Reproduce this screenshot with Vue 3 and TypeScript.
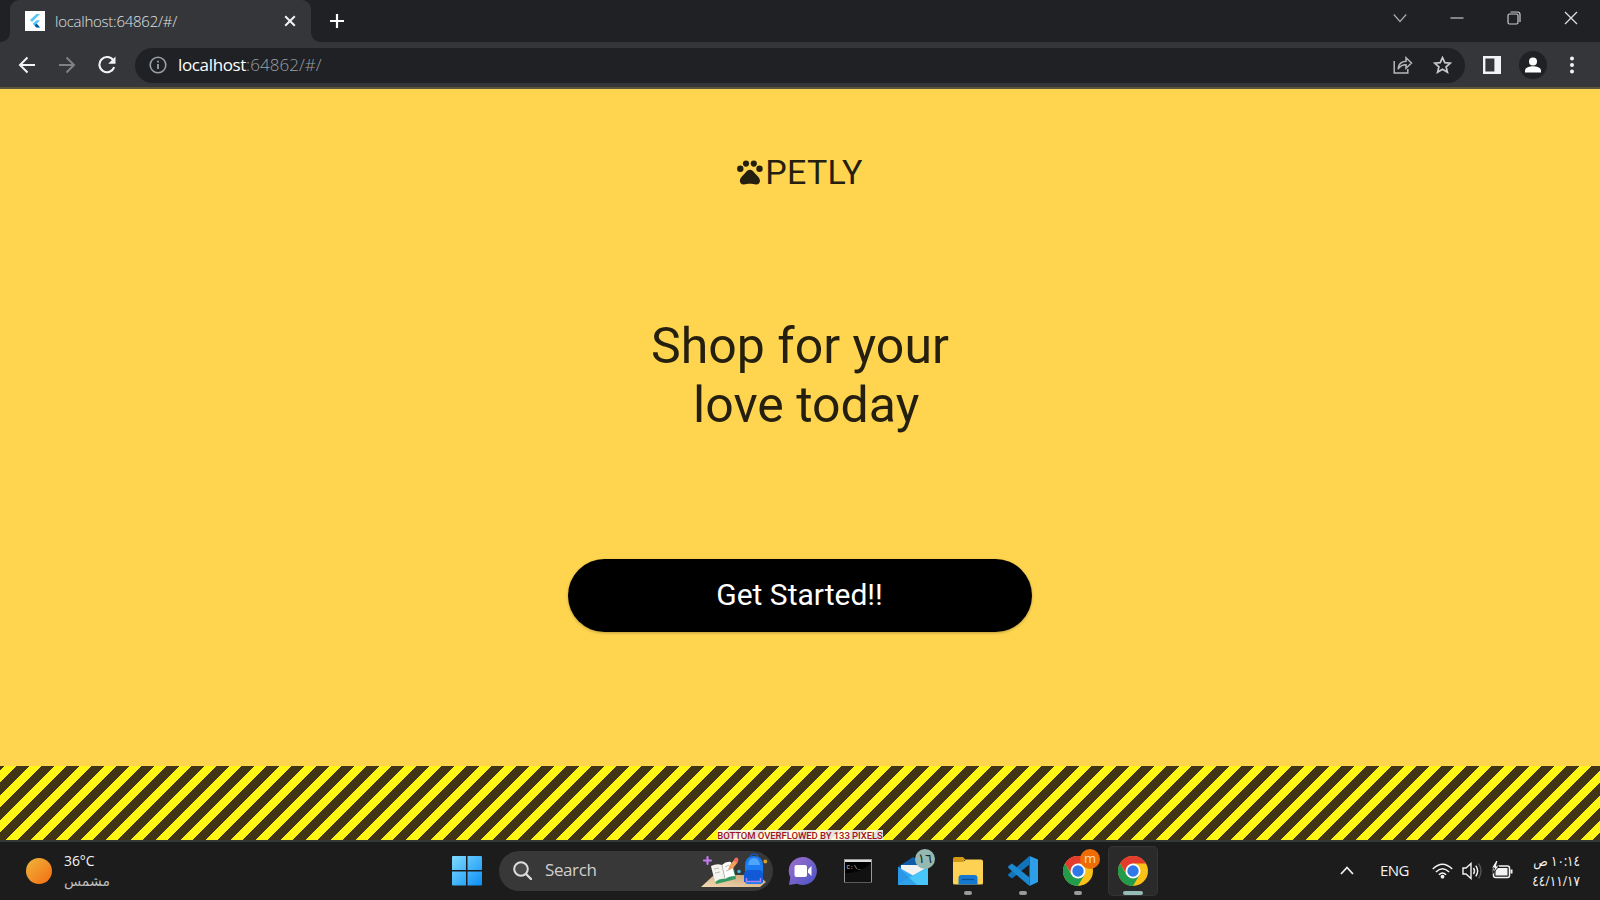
<script setup lang="ts">
const overflowLabel = 'BOTTOM OVERFLOWED BY 133 PIXELS'
</script>

<template>
  <div class="screen">
    <header class="tabs">
      <div class="tab">
        <svg class="favicon" width="20" height="20" viewBox="0 0 20 20">
          <rect width="20" height="20" fill="#fff" />
          <path d="M11.5 3H15L7 11 5 9z" fill="#54c5f8" />
          <path d="M11.5 9.3H15L11.7 12.7 15 16.500H11.500L7.700 12.700z" fill="#54c5f8" />
          <path d="M9.600 14.500l2-1.900L15 16.500H11.500z" fill="#01579b" />
        </svg>
        <span class="tab-title">localhost:64862/#/</span>
        <svg width="12" height="12" viewBox="0 0 12 12"><path d="M1.200 1.200l9.600 9.600M10.800 1.200L1.200 10.800" stroke="#f1f3f4" stroke-width="2" /></svg>
      </div>
      <svg class="plus" width="16" height="16" viewBox="0 0 16 16"><path d="M8 1v14M1 8h14" stroke="#fff" stroke-width="2.200" /></svg>
      <div class="win-controls">
        <svg width="14" height="14" viewBox="0 0 14 14"><path d="M.8 3.500L7 10.500l6.200-7" fill="none" stroke="#aaabad" stroke-width="1.200" /></svg>
        <svg width="14" height="14" viewBox="0 0 14 14"><path d="M.5 7h13" stroke="#bbb" stroke-width="1.300" /></svg>
        <svg width="14" height="14" viewBox="0 0 14 14"><g fill="none" stroke="#ccc" stroke-width="1.200"><rect x="1" y="3" width="10" height="10" rx="1.500" /><path d="M3.500 1H10.500Q13 1 13 3.500V11" /></g></svg>
        <svg width="14" height="14" viewBox="0 0 14 14"><path d="M1 1l12 12M13 1L1 13" stroke="#ddd" stroke-width="1.300" /></svg>
      </div>
    </header>

    <nav class="toolbar">
      <svg width="18" height="18" viewBox="0 0 18 18"><path d="M17 9H2.500M9.500 1.500L2 9l7.500 7.500" fill="none" stroke="#f1f3f4" stroke-width="2" /></svg>
      <svg width="18" height="18" viewBox="0 0 18 18"><path d="M1 9h14.500M8.500 1.500L16 9l-7.500 7.500" fill="none" stroke="#808184" stroke-width="2" /></svg>
      <svg width="18" height="18" viewBox="0 0 18 18"><path d="M15.200 4.200A7.600 7.600 0 1 0 16.200 11.200" fill="none" stroke="#f1f3f4" stroke-width="2.100" /><path d="M17.500.5V7.800H10.200z" fill="#f1f3f4" /></svg>
      <div class="address">
        <svg width="18" height="18" viewBox="0 0 18 18"><circle cx="9" cy="9" r="7.800" fill="none" stroke="#9aa0a6" stroke-width="1.600" /><path d="M9 8v5M9 4.800v1.800" stroke="#9aa0a6" stroke-width="1.800" /></svg>
        <span class="url"><b>localhost</b>:64862/#/</span>
        <svg class="share" width="20" height="18" viewBox="0 0 20 18"><g fill="none" stroke="#b4b6b9" stroke-width="1.500"><path d="M1.200 5v12h13.600v-4" /><path d="M5 13C5.500 8 8.500 5.500 13 5.300V1.800L18.500 7 13 12.200V8.800C9.500 8.800 7 10 5 13z" /></g></svg>
        <svg width="19" height="18" viewBox="0 0 19 18"><path d="M9.500 1.600l2.300 5 5.500.5-4.200 3.700 1.300 5.400-4.900-2.900-4.900 2.900 1.300-5.400L1.700 7.100l5.500-.5z" fill="none" stroke="#c7c9cc" stroke-width="1.700" /></svg>
      </div>
      <svg class="panel" width="18" height="18" viewBox="0 0 18 18"><path fill-rule="evenodd" d="M0 0h18v18H0zM2.400 2.600v12.800h9V2.600z" fill="#f1f3f4" /></svg>
      <svg class="avatar" width="28" height="28" viewBox="0 0 28 28"><circle cx="14" cy="14" r="14" fill="#202124" /><circle cx="14" cy="10.500" r="4" fill="#fff" /><path d="M6 21.500v-2c0-3 5-4.300 8-4.300s8 1.300 8 4.300v2z" fill="#fff" /></svg>
      <svg class="dots" width="6" height="18" viewBox="0 0 6 18"><g fill="#f1f3f4"><circle cx="3" cy="2.500" r="2" /><circle cx="3" cy="9" r="2" /><circle cx="3" cy="15.500" r="2" /></g></svg>
    </nav>

    <main class="page">
      <div class="brand">
        <svg width="26" height="25" viewBox="0 0 26 25"><g fill="#251f10"><circle cx="3.300" cy="8.800" r="3.200" /><circle cx="9" cy="3.600" r="3.100" /><circle cx="16.800" cy="3.600" r="3.100" /><circle cx="22.500" cy="8.800" r="3.200" /><path d="M12.900 9.800c2.200 0 3.400 1.500 4.700 3.100 1.600 2 4.900 4.200 5.300 7.100.4 2.600-1.200 4.500-3.800 4.500-2.200 0-3.800-.7-6.200-.7s-4 .7-6.200.7c-2.600 0-4.200-1.900-3.800-4.500.4-2.900 3.700-5.100 5.300-7.100 1.300-1.600 2.500-3.100 4.700-3.100z" /></g></svg>
        <span>PETLY</span>
      </div>
      <h1>Shop for your<br>&nbsp;love today</h1>
      <button>Get Started!!</button>
      <div class="hazard"><span>{{ overflowLabel }}</span></div>
    </main>

    <footer class="taskbar">
      <div class="weather">
        <i class="sun"></i>
        <div><p>36°C</p><p class="cond" dir="rtl">مشمس</p></div>
      </div>
      <svg class="start" width="30" height="30" viewBox="0 0 30 30">
        <defs><linearGradient id="win" x1="0" y1="0" x2="30" y2="30" gradientUnits="userSpaceOnUse"><stop offset="0" stop-color="#7fdcff" /><stop offset="1" stop-color="#0a8df5" /></linearGradient></defs>
        <path d="M1 0h13v14H0V1q0-1 1-1zM15.500 0H29q1 0 1 1v13H15.500zM0 15.500h14v14H1q-1 0-1-1zM15.500 15.500H30v13q0 1-1 1H15.500z" fill="url(#win)" />
      </svg>
      <div class="search">
        <svg width="19" height="19" viewBox="0 0 19 19"><circle cx="8" cy="8" r="6.800" fill="#4a4a4a" stroke="#ddd" stroke-width="2" /><path d="M13 13l5 5" stroke="#ddd" stroke-width="2.400" stroke-linecap="round" /></svg>
        <span>Search</span>
        <svg class="art" width="68" height="36" viewBox="0 0 68 36">
          <defs><linearGradient id="desk" x1="0" y1="1" x2="1" y2="0"><stop offset="0" stop-color="#f3d9b4" /><stop offset="1" stop-color="#c9a172" /></linearGradient></defs>
          <path d="M1 34L14 22H58l8 7-6 5z" fill="url(#desk)" />
          <path d="M7.500 4v7M4 7.500h7" stroke="#c47af0" stroke-width="2.200" stroke-linecap="round" />
          <path d="M11 14l22-4 3 16-20 5z" fill="#349a61" />
          <path d="M11 13q6-3 11-1l3 14q-5-1-10 3z" fill="#f5f4ef" /><path d="M22 12q4-4 9-3l4 14q-6 0-10 3z" fill="#fff" />
          <path d="M22 12l3 14" stroke="#b9b9b4" />
          <path d="M14 16l5-1M15 20l5-1M25 14l4-2M26 18l5-2" stroke="#bbb" />
          <path d="M28 17l1.500-4.500 5-6 3.500 2.500-5 6.300z" fill="#f2a05a" /><path d="M33.500 7.500l1.500-2.500q3-1.500 3.500 2l-1.500 3z" fill="#ee6b5b" />
          <circle cx="39" cy="18.500" r="1.800" fill="#48b9dd" /><circle cx="65.300" cy="8.500" r="1.900" fill="#d8a020" />
          <path d="M50 5q0-4 4-4t4 4" fill="none" stroke="#1455b8" stroke-width="1.500" />
          <path d="M45 28V13q0-10 9-10t9 10v15q0 3-3 3H48q-3 0-3-3z" fill="#1c7af2" />
          <path d="M48 12q1-7 6-7t6 7z" fill="#4ea6ff" /><path d="M44 29V22q0-5 5-5h9q5 0 5 5v7z" fill="#1259d6" /><path d="M46.500 25v3.500h14V25" fill="none" stroke="#a882ef" stroke-width="1.500" />
        </svg>
      </div>
      <div class="apps">
        <div class="app">
          <svg width="30" height="30" viewBox="0 0 30 30"><defs><linearGradient id="chat" x1="0" y1="0" x2="1" y2="1"><stop offset="0" stop-color="#a06fcf" /><stop offset="1" stop-color="#4854c4" /></linearGradient></defs><path d="M15 1a14 14 0 1 1-6 26.700L1 29l1.300-7.500A14 14 0 0 1 15 1z" fill="url(#chat)" /><rect x="6.500" y="9" width="12.500" height="12" rx="2" fill="#fff" /><path d="M20 13.500l3.500-3.500v10L20 16.500z" fill="#fff" /></svg>
        </div>
        <div class="app">
          <svg width="28" height="24" viewBox="0 0 28 24"><rect x=".5" y=".5" width="27" height="22.500" fill="#000" stroke="#999" /><path d="M1 1h26v2H1z" fill="#ddd" /><path d="M1 23V14Q17 14 27 4V23z" fill="#111" /><text x="2.500" y="9.500" font-size="6" font-family="Liberation Mono" fill="#ddd">C:\_</text></svg>
        </div>
        <div class="app">
          <svg width="30" height="30" viewBox="0 0 30 30"><path d="M0 11L15 1l15 10v18H0z" fill="#0f5ca8" /><path d="M3 9h24v12H3z" fill="#f2f2f2" /><path d="M0 11l15 8.500L30 11v17q0 1-1 1H1q-1 0-1-1z" fill="#35aaf0" /><path d="M0 28L30 11v17q0 1-1 1H1z" fill="#47c6f7" /><path d="M0 11l19 18H1q-1 0-1-1z" fill="#1f8be0" opacity=".6" /></svg>
          <span class="badge mail">١٦</span>
        </div>
        <div class="app">
          <svg width="30" height="30" viewBox="0 0 30 30"><path d="M0 3q0-2 2-2h8l3 3h-2v5H0z" fill="#d49a15" /><path d="M0 6h10l3-2.500h15q2 0 2 2V27q0 1.500-1.500 1.500h-27Q0 28.500 0 27z" fill="#fdd153" /><path d="M5.500 28.500V22q0-3 3-3h13q3 0 3 3v6.500z" fill="#1679cf" /><path d="M9 23.500h12" stroke="#0b4f94" stroke-width="1.300" /></svg>
          <i class="pill"></i>
        </div>
        <div class="app">
          <svg width="30" height="30" viewBox="0 0 30 30"><path d="M21.500 0L30 3.500V26l-8.500 4z" fill="#2d9fe8" /><path d="M21.500 0v8.500L4 22.500.5 20q-.8-1 0-2z" fill="#1273b8" /><path d="M21.500 30v-8.500L4 7.500.5 10q-.8 1 0 2z" fill="#1b88d2" /></svg>
          <i class="pill"></i>
        </div>
        <div v-for="active in [false, true]" :key="String(active)" class="app" :class="{ active }">
          <svg width="30" height="30" viewBox="0 0 30 30"><circle cx="15" cy="15" r="15" fill="#fbc116" /><path d="M15 15L9 18.500 2 7.500A15 15 0 0 1 28 7.500H15z" fill="#e33b2e" /><path d="M2 7.500A15 15 0 0 0 15 30L21.500 18.700H8.500z" fill="#229c4c" /><circle cx="15" cy="15" r="7.500" fill="#fff" /><circle cx="15" cy="15" r="5.700" fill="#2f78e8" /></svg>
          <span v-if="!active" class="badge profile">m</span>
          <i class="pill"></i>
        </div>
      </div>
      <div class="tray">
        <svg width="14" height="9" viewBox="0 0 14 9"><path d="M1 8l6-6.500L13 8" fill="none" stroke="#eee" stroke-width="1.800" /></svg>
        <span class="lang">ENG</span>
        <svg class="wifi" width="21" height="16" viewBox="0 0 21 16"><g fill="none" stroke="#f2f2f2" stroke-width="1.500"><path d="M.8 6Q10.500-3.600 20.200 6M3.900 9Q10.500 2.400 17.100 9M6.900 11.800Q10.500 8.200 14.100 11.800" /></g><circle cx="10.500" cy="13.700" r="1.900" fill="#f2f2f2" /></svg>
        <svg class="vol" width="21" height="18" viewBox="0 0 21 18"><g fill="none" stroke="#f2f2f2" stroke-width="1.400"><path d="M1 6h3l5-4.500v15L4 12H1z" /><path d="M11.500 6q2 3 0 6M13.800 3.700q3.700 5.300 0 10.600" /><path d="M16.500 1.500q5 7.500 0 15" stroke="#555" /></g></svg>
        <svg class="bat" width="21" height="18" viewBox="0 0 21 18"><rect x="1.500" y="4" width="16" height="11.500" rx="2" fill="none" stroke="#f2f2f2" stroke-width="1.500" /><path d="M3.500 6h12v7.500h-12z" fill="#f2f2f2" /><path d="M18.500 7.500h2v4h-2z" fill="#f2f2f2" /><path d="M4-1.500L-.5 6H2.500L1 11.500 7 4H4.500L6-1.500z" fill="#f2f2f2" stroke="#1c1c1c" /></svg>
        <div class="clock"><p dir="rtl">١٠:١٤ ص</p><p class="date" dir="ltr">٤٤/١١/١٧</p></div>
      </div>
    </footer>
  </div>
</template>

<style>
body { margin: 0; overflow: hidden; }
</style>

<style scoped>
.screen { width: 1600px; height: 900px; display: flex; flex-direction: column; overflow: hidden; font-family: "Open Sans", "Noto Sans", "DejaVu Sans", sans-serif; }
svg { display: block; flex: none; }
p { margin: 0; }
.tabs { height: 42px; flex: none; display: flex; background: #202124; }
.tab { box-sizing: border-box; position: relative; width: 301px; height: 42px; margin-left: 10px; padding: 0 15px; border-radius: 9px 9px 0 0; background: #35363a; display: flex; align-items: center; }
.tab::before, .tab::after { content: ""; position: absolute; bottom: 0; width: 9px; height: 9px; }
.tab::before { left: -9px; background: radial-gradient(circle at 0 0, #202124 8.500px, #35363a 9px); }
.tab::after { right: -9px; background: radial-gradient(circle at 100% 0, #202124 8.500px, #35363a 9px); }
.tab-title { flex: 1; margin-left: 10px; color: #dfe1e5; font-size: 15px; font-weight: 300; letter-spacing: -.25px; white-space: nowrap; }
.plus { margin: 13px 0 0 18px; }
.win-controls { margin: 11px 22px 0 auto; display: flex; gap: 43px; }
.toolbar { box-sizing: border-box; height: 47px; flex: none; display: flex; align-items: center; padding: 1px 0 0 18px; background: #35363a; border-bottom: 2px solid #5c543c; gap: 22px; }
.address { box-sizing: border-box; width: 1330px; height: 35px; margin-left: -3px; border-radius: 18px; background: #202124; display: flex; align-items: center; padding: 0 13px 0 14px; }
.url { margin-left: 11px; flex: 1; font-size: 17px; font-weight: 300; color: #9aa0a6; letter-spacing: .05px; line-height: 24px; }
.url b { color: #fff; font-weight: 400; letter-spacing: -.35px; }
.share { margin-right: 20px; }
.panel { margin-left: -4px; }
.avatar { margin-left: -4px; }
.dots { margin-left: 0; }
.page { height: 751px; flex: none; background: #ffd54f; display: flex; flex-direction: column; align-items: center; font-family: Roboto, sans-serif; color: #251f10; }
.brand { margin-top: 63px; height: 40px; display: flex; align-items: center; gap: 2px; font-size: 34px; line-height: 40px; letter-spacing: .25px; }
h1 { margin: 125px 0 0; text-align: center; font-size: 50px; line-height: 59px; font-weight: 400; }
button { margin-top: 124px; width: 464px; height: 73px; flex: none; border: 0; padding: 0 1px 2px 0; border-radius: 37px; background: #000; color: #fff; font: 400 30px Roboto, sans-serif; box-shadow: 0 1px 3px #0004; }
.hazard { margin-top: auto; width: 1600px; height: 74px; flex: none; display: flex; align-items: flex-end; justify-content: center; background: repeating-linear-gradient(135deg, #413516 0 3.040px, #fff614 3.040px 11.880px, #413516 11.880px 17.678px); }
.hazard span { background: #fffd; color: #a0141e; font-size: 9.500px; line-height: 9px; padding-top: 1px; letter-spacing: -.06px; font-weight: 500; white-space: nowrap; }
.taskbar { box-sizing: border-box; height: 60px; flex: none; border-top: 2px solid #343838; background: #1c1c1c; display: flex; align-items: center; padding-bottom: 1px; color: #f2f2f2; }
.weather { width: 426px; padding-left: 26px; display: flex; align-items: center; gap: 12px; font-size: 14px; line-height: 20px; }
.weather p { letter-spacing: -.1px; }
.weather .cond { color: #bdbdbd; font-size: 14px; text-align: left; }
.sun { width: 26px; height: 26px; border-radius: 50%; background: linear-gradient(135deg, #efb83a, #f36b12); }
.start { margin-right: 17px; }
.search { box-sizing: border-box; width: 274px; height: 40px; border-radius: 20px; background: #383838; display: flex; align-items: center; padding: 0 5px 0 14px; color: #d0d0d0; font-size: 17px; }
.search span { margin: -2px 0 0 13px; letter-spacing: -.4px; }
.art { margin-left: auto; }
.apps { display: flex; margin-left: 5px; gap: 5px; }
.app { position: relative; width: 50px; height: 50px; border-radius: 5px; display: flex; align-items: center; justify-content: center; }
.app.active { background: #2a2a2a; box-shadow: inset 0 0 0 1px #343434; }
.pill { position: absolute; bottom: 1px; left: 21px; width: 8px; height: 4px; border-radius: 2px; background: #9a9a9a; }
.active .pill { left: 15px; width: 20px; background: #96bcb8; }
.badge { position: absolute; left: 27px; top: 3px; width: 20px; height: 20px; border-radius: 50%; text-align: center; font-size: 13px; line-height: 19px; }
.mail { background: #95b9b1; color: #172725; letter-spacing: -1px; }
.profile { background: #ee6c05; color: #ffd9b8; }
.tray { margin-left: auto; padding-right: 20px; display: flex; align-items: center; }
.lang { margin: -1px 0 0 26px; font-size: 15px; letter-spacing: -.5px; }
.wifi { margin-left: 23px; }
.vol { margin-left: 9px; }
.bat { margin-left: 9px; overflow: visible; }
.clock { width: 67px; font-size: 14px; line-height: 20px; white-space: nowrap; transform: scaleX(.86); transform-origin: right; }
.clock p { display: flex; justify-content: flex-start; }
.clock .date { justify-content: flex-end; }
</style>
